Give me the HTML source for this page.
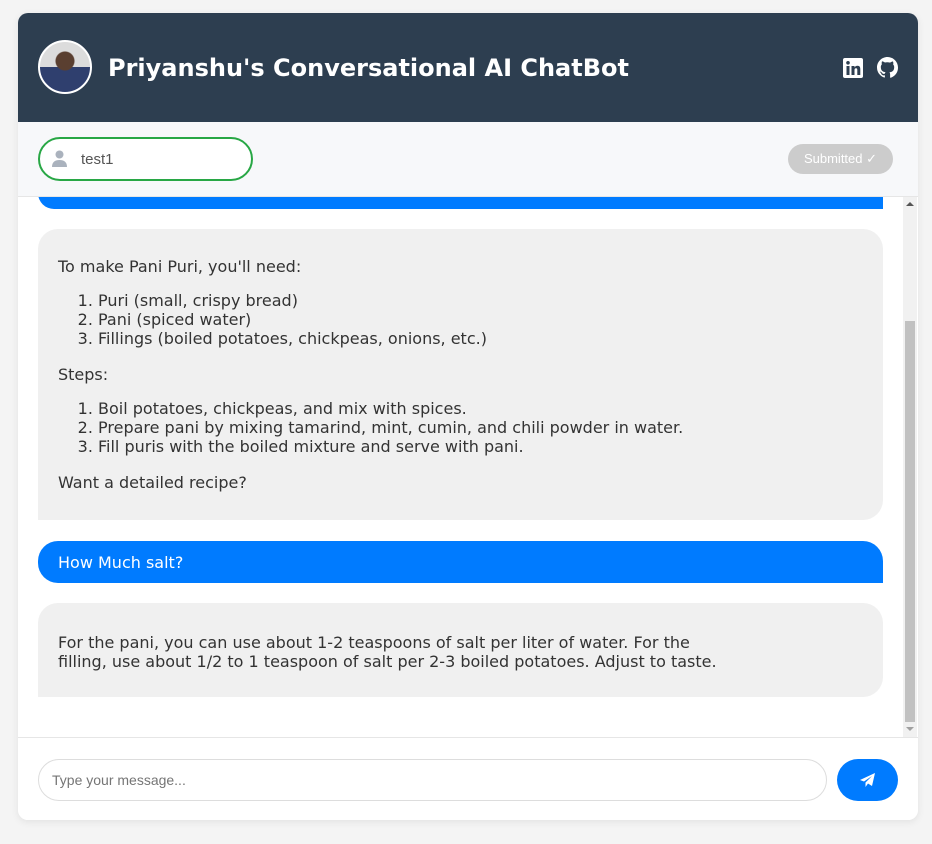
<!DOCTYPE html>
<html><head><style>
*{box-sizing:border-box;margin:0;padding:0}
body{width:932px;height:844px;background:#f4f4f4;font-family:"DejaVu Sans","Liberation Sans",sans-serif;position:relative;overflow:hidden}
.card{position:absolute;left:18px;top:13px;width:900px;height:807px;background:#fff;border-radius:10px;overflow:hidden;box-shadow:0 2px 8px rgba(0,0,0,.08)}
.hdr{height:109px;background:#2d3e50;position:relative}
.av{position:absolute;left:20px;top:27px;width:54px;height:54px;border-radius:50%;border:2px solid #fff;background:radial-gradient(circle at 50% 38%,#5a3f30 0 9px,transparent 10px),linear-gradient(#dcdcdc 0 50%,#2f3f6e 50%);}
.ttl{position:absolute;left:90px;top:41px;color:#fff;font-weight:bold;font-size:24px}
.sub{position:absolute;top:109px;left:0;width:900px;height:75px;background:#f7f8fa;border-bottom:1px solid #e6e6e6}
.name{position:absolute;left:20px;top:15px;width:215px;height:44px;border:2px solid #28a745;border-radius:22px;background:#fff;font-family:"Liberation Sans",sans-serif;font-size:15px;color:#555;padding:12px 0 0 41px}
.sb{position:absolute;left:770px;top:22px;width:105px;height:30px;border-radius:15px;background:#ccc;color:#fff;font-family:"Liberation Sans",sans-serif;font-size:13px;text-align:center;line-height:30px}
.chat{position:absolute;top:184px;left:0;width:900px;height:540px;overflow:hidden}
.msg{position:absolute;left:20px;width:845px;font-size:16px;color:#333;line-height:19px}
.u{background:#007bff;color:#fff;border-radius:20px 20px 0 20px}
.b{background:#f0f0f0;border-radius:20px 20px 20px 0;padding:20px}
ol{padding-left:40px;margin:15px 0 17px}
.scr{position:absolute;right:1px;top:184px;width:14px;height:540px;background:#f1f1f1}
.inp{position:absolute;top:724px;left:0;width:900px;height:83px;border-top:1px solid #e6e6e6;background:#fff}
.box{position:absolute;left:20px;top:21px;width:789px;height:42px;border:1px solid #ddd;border-radius:21px;font-family:"Liberation Sans",sans-serif;font-size:14px;color:#757575;padding:12px 0 0 13px}
.send{position:absolute;left:819px;top:21px;width:61px;height:42px;border-radius:21px;background:#007bff}
</style></head><body>
<div class="card">
<div class="hdr"><div class="av"></div><div class="ttl">Priyanshu's Conversational AI ChatBot</div>
<svg style="position:absolute;left:825px;top:45px" width="20" height="20" viewBox="0 0 20 20"><rect width="20" height="20" rx="2" fill="#fff"/><rect x="3.5" y="8" width="3" height="9" fill="#2d3e50"/><circle cx="5" cy="4.8" r="1.8" fill="#2d3e50"/><path d="M8.5 8h3v1.5c.6-1 1.6-1.7 3-1.7 2.3 0 2.8 1.5 2.8 3.6V17h-3v-5c0-1-.2-1.8-1.3-1.8s-1.5.8-1.5 1.8v5h-3z" fill="#2d3e50"/></svg>
<svg style="position:absolute;left:859px;top:44px" width="21" height="21" viewBox="0 0 16 16"><path fill="#fff" d="M8 0C3.58 0 0 3.58 0 8c0 3.54 2.29 6.53 5.470 7.59.4.07.55-.17.55-.38v-1.330c-2.23.48-2.7-1.07-2.7-1.07-.36-.92-.89-1.170-.89-1.17-.73-.5.05-.49.05-.49.8.06 1.23.83 1.23.83.72 1.22 1.87.87 2.33.67.07-.52.28-.87.51-1.07-1.78-.2-3.64-.89-3.64-3.95 0-.87.31-1.59.82-2.15-.08-.2-.36-1.02.08-2.12 0 0 .67-.21 2.2.82A7.6 7.6 0 0 1 8 4.04c.68 0 1.36.09 2 .27 1.53-1.04 2.2-.82 2.2-.82.44 1.1.16 1.92.08 2.12.51.56.82 1.27.82 2.15 0 3.07-1.87 3.75-3.65 3.95.29.25.54.73.54 1.48v2.2c0 .21.15.46.55.38A8.01 8.01 0 0 0 16 8c0-4.42-3.58-8-8-8z"/></svg>
</div>
<div class="sub"><div class="name">test1</div>
<svg style="position:absolute;left:34px;top:28px" width="15" height="17" viewBox="0 0 15 17"><circle cx="7.5" cy="4.5" r="4" fill="#aab2bd"/><path d="M0 17c0-5 3-7 7.5-7S15 12 15 17z" fill="#aab2bd"/></svg>
<div class="sb">Submitted ✓</div></div>
<div class="chat">
<div class="msg u" style="top:-20px;height:32px"></div>
<div class="msg b" style="top:32px;height:291px;padding-top:28px">To make Pani Puri, you'll need:
<ol><li>Puri (small, crispy bread)</li><li>Pani (spiced water)</li><li>Fillings (boiled potatoes, chickpeas, onions, etc.)</li></ol>
Steps:
<ol><li>Boil potatoes, chickpeas, and mix with spices.</li><li>Prepare pani by mixing tamarind, mint, cumin, and chili powder in water.</li><li>Fill puris with the boiled mixture and serve with pani.</li></ol>
Want a detailed recipe?</div>
<div class="msg u" style="top:344px;height:42px;padding:12px 20px">How Much salt?</div>
<div class="msg b" style="top:406px;height:94px;padding-top:30px;padding-right:160px">For the pani, you can use about 1-2 teaspoons of salt per liter of water. For the filling, use about 1/2 to 1 teaspoon of salt per 2-3 boiled potatoes. Adjust to taste.</div>
</div>
<div class="scr"><div style="position:absolute;left:3px;top:5px;border:4px solid transparent;border-bottom:4px solid #555;border-top:0"></div><div style="position:absolute;left:2px;top:124px;width:10px;height:401px;background:#c1c1c1"></div><div style="position:absolute;left:3px;top:530px;border:4px solid transparent;border-top:4px solid #a0a0a0;border-bottom:0"></div></div>
<div class="inp"><div class="box">Type your message...</div><div class="send"><svg style="position:absolute;left:23px;top:14px" width="15" height="14" viewBox="0 0 15 14"><path d="M15 0L0 7l4 1.5L12 3 5.5 9.5V14l2.5-3.5L12 13z" fill="#fff"/></svg></div></div>
</div>
</body></html>
